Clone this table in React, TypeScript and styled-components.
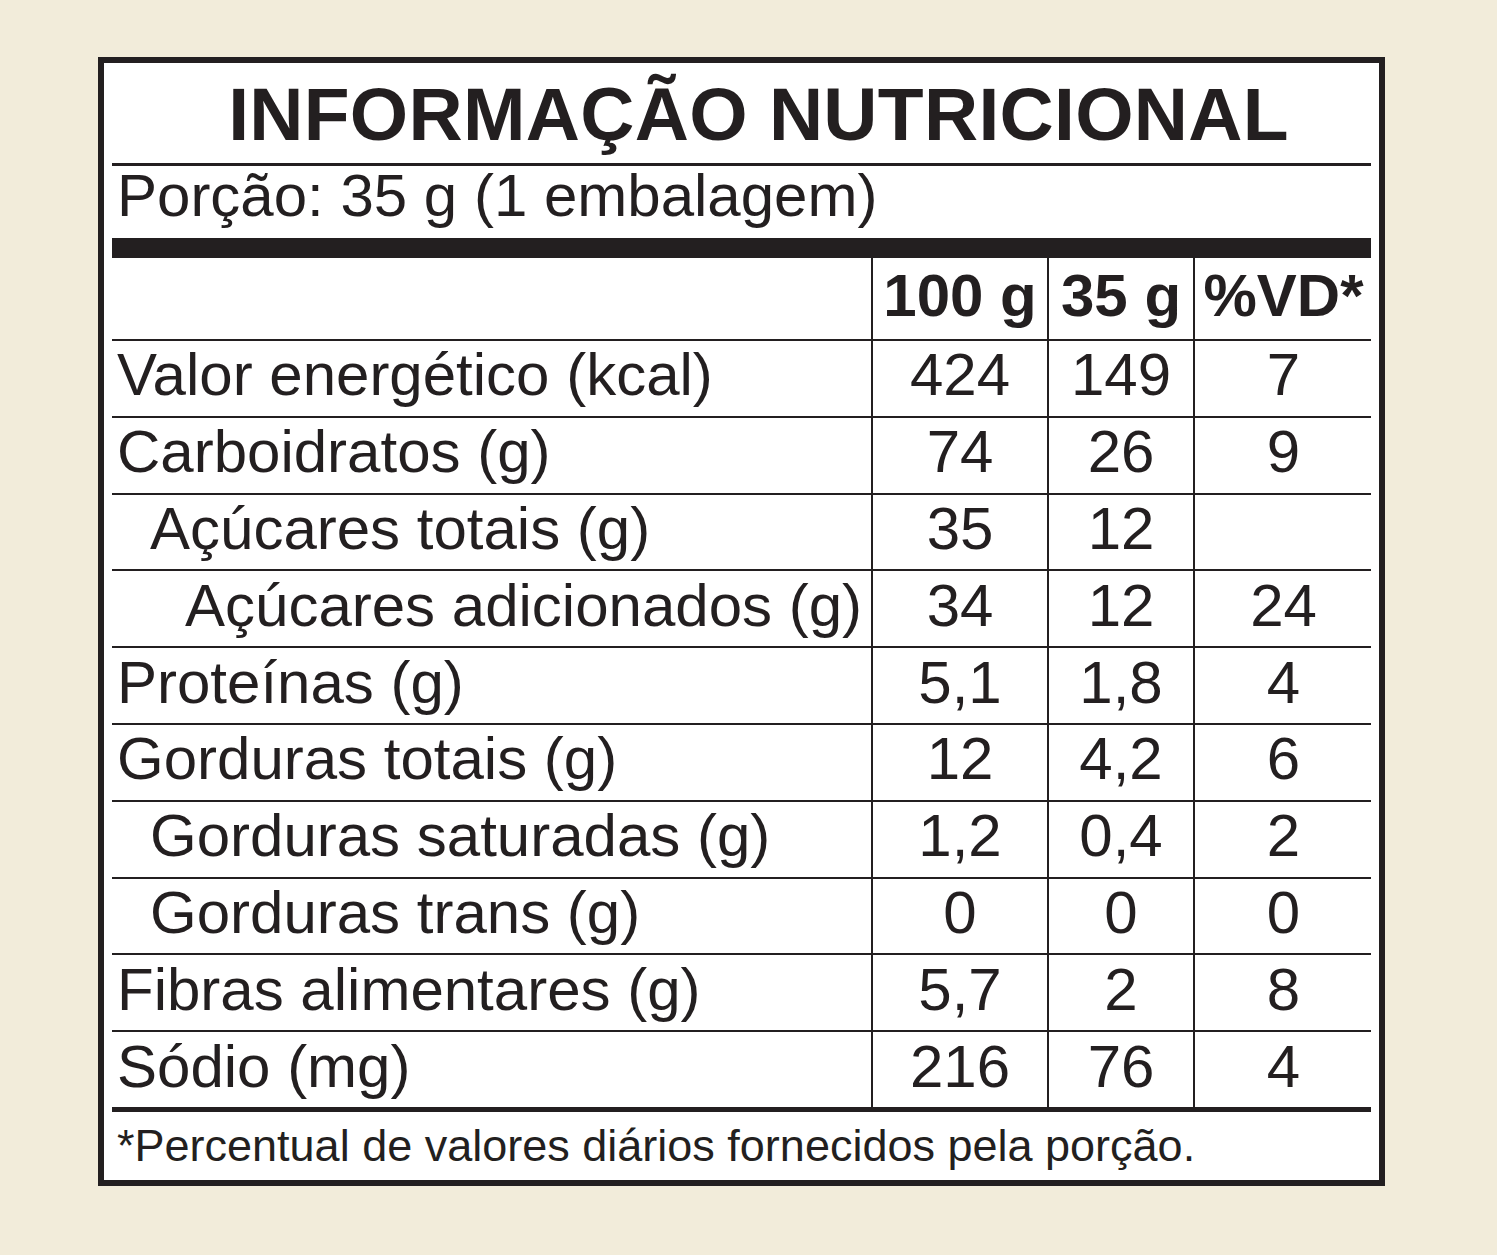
import React from 'react';
import styled, { createGlobalStyle } from 'styled-components';

const ink = '#231f20';

const GlobalStyle = createGlobalStyle`
  *, *::before, *::after { box-sizing: border-box; }
  html, body { margin: 0; padding: 0; background: #ffffff; }
  body {
    font-family: "Liberation Sans", Arial, Helvetica, sans-serif;
    color: ${ink};
  }
`;

const Page = styled.div`
  width: 1497px;
  height: 1255px;
  background: #f2ecda;
  padding: 57px 0 0 98px;
`;

const Label = styled.section`
  width: 1287px;
  height: 1129px;
  border: 6px solid ${ink};
  background: #ffffff;
  padding: 0 8px;
  display: flex;
  flex-direction: column;
`;

const Title = styled.h1`
  margin: 0;
  height: 103px;
  line-height: 100px;
  padding-top: 1px;
  font-size: 75px;
  font-weight: 700;
  letter-spacing: 0.3px;
  text-align: center;
  padding-left: 34px;
  border-bottom: 3px solid ${ink};
  white-space: nowrap;
`;

const Serving = styled.div`
  height: 72px;
  line-height: 60px;
  padding: 0 0 9px 5px;
  font-size: 60px;
  white-space: nowrap;
`;

const Bar = styled.div<{ $h: number }>`
  height: ${p => p.$h}px;
  background: ${ink};
`;

const Row = styled.div<{ $head?: boolean }>`
  display: grid;
  grid-template-columns: 759px 176px 146px 179px;
  height: ${p => (p.$head ? '81px' : '76.8px')};
  border-top: ${p => (p.$head ? 'none' : `2px solid ${ink}`)};
  font-size: 60px;
  font-weight: ${p => (p.$head ? 700 : 400)};
  line-height: 60px;
`;

const Name = styled.div<{ $level: number }>`
  display: flex;
  align-items: center;
  padding-left: ${p => [5, 38, 73][p.$level]}px;
  padding-bottom: 6px;
  white-space: nowrap;
`;

const Value = styled.div<{ $head?: boolean }>`
  display: flex;
  align-items: center;
  justify-content: center;
  border-left: 2px solid ${ink};
  padding-bottom: ${p => (p.$head ? '5px' : '6px')};
  white-space: nowrap;
`;

const Footnote = styled.div`
  height: 68px;
  line-height: 68px;
  font-size: 45px;
  padding-left: 5px;
  white-space: nowrap;
`;

type Item = { name: string; level: number; v100: string; v35: string; vd: string };

const items: Item[] = [
  { name: 'Valor energético (kcal)', level: 0, v100: '424', v35: '149', vd: '7' },
  { name: 'Carboidratos (g)', level: 0, v100: '74', v35: '26', vd: '9' },
  { name: 'Açúcares totais (g)', level: 1, v100: '35', v35: '12', vd: '' },
  { name: 'Açúcares adicionados (g)', level: 2, v100: '34', v35: '12', vd: '24' },
  { name: 'Proteínas (g)', level: 0, v100: '5,1', v35: '1,8', vd: '4' },
  { name: 'Gorduras totais (g)', level: 0, v100: '12', v35: '4,2', vd: '6' },
  { name: 'Gorduras saturadas (g)', level: 1, v100: '1,2', v35: '0,4', vd: '2' },
  { name: 'Gorduras trans (g)', level: 1, v100: '0', v35: '0', vd: '0' },
  { name: 'Fibras alimentares (g)', level: 0, v100: '5,7', v35: '2', vd: '8' },
  { name: 'Sódio (mg)', level: 0, v100: '216', v35: '76', vd: '4' },
];

export default function App() {
  return (
    <>
      <GlobalStyle />
      <Page>
        <Label>
          <Title>INFORMAÇÃO NUTRICIONAL</Title>
          <Serving>Porção: 35 g (1 embalagem)</Serving>
          <Bar $h={20} />
          <Row $head>
            <Name $level={0} />
            <Value $head>100 g</Value>
            <Value $head>35 g</Value>
            <Value $head>%VD*</Value>
          </Row>
          {items.map(it => (
            <Row key={it.name}>
              <Name $level={it.level}>{it.name}</Name>
              <Value>{it.v100}</Value>
              <Value>{it.v35}</Value>
              <Value>{it.vd}</Value>
            </Row>
          ))}
          <Bar $h={5} />
          <Footnote>*Percentual de valores diários fornecidos pela porção.</Footnote>
        </Label>
      </Page>
    </>
  );
}
